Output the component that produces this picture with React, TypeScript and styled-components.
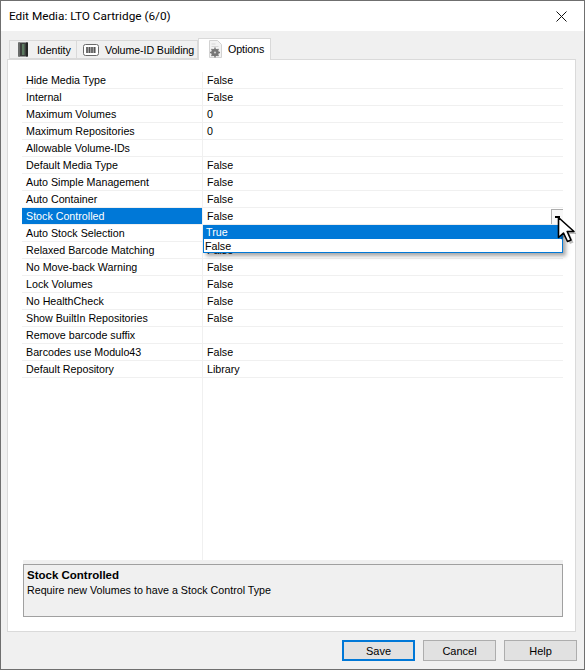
import React from 'react';
import styled, { createGlobalStyle } from 'styled-components';

const GlobalStyle = createGlobalStyle`
    html, body {
        margin: 0;
        padding: 0;
        background: #F0F0F0;
    }
`;

const Window = styled.div`
    position: relative;
    box-sizing: border-box;
    width: 585px;
    height: 670px;
    display: flex;
    flex-direction: column;
    background: #F0F0F0;
    border: 1px solid #6F6F6F;
    font-family: "Liberation Sans", Arial, sans-serif;
    font-size: 10.7px;
    color: #000;
    overflow: hidden;
`;

const TitleBar = styled.div`
    height: 30px;
    flex: none;
    display: flex;
    align-items: center;
    justify-content: space-between;
    padding-left: 8px;
    background: #FFF;
    font-family: Roboto, sans-serif;
    font-size: 11.8px;
`;

const CloseButton = styled.div`
    width: 46px;
    height: 30px;
    display: flex;
    align-items: center;
    justify-content: center;
`;

const TabStrip = styled.div`
    height: 28px;
    flex: none;
    display: flex;
    align-items: flex-end;
    padding-left: 8px;
`;

const Tab = styled.div<{ $width: number; $iconGap: number; $pad: number; $active?: boolean }>`
    box-sizing: border-box;
    position: relative;
    flex: none;
    display: flex;
    align-items: center;
    width: ${({ $width }) => $width}px;
    height: ${({ $active }) => ($active ? '22px' : '19px')};
    padding-left: ${({ $pad }) => $pad}px;
    padding-bottom: ${({ $active }) => ($active ? '2px' : '0')};
    gap: ${({ $iconGap }) => $iconGap}px;
    margin-bottom: ${({ $active }) => ($active ? '-1px' : '0')};
    background: ${({ $active }) => ($active ? '#FFF' : '#F0F0F0')};
    border: 1px solid #D9D9D9;
    border-left-width: ${({ $pad }) => ($pad === 6 ? '0' : '1px')};
    border-bottom-width: ${({ $active }) => ($active ? '0' : '1px')};
    z-index: ${({ $active }) => ($active ? 1 : 0)};
`;

const TabLabel = styled.span`
    white-space: nowrap;
    letter-spacing: -0.1px;
`;

const TabPanel = styled.div`
    box-sizing: border-box;
    flex: none;
    width: 569px;
    height: 573px;
    margin-left: 6px;
    display: flex;
    flex-direction: column;
    padding: 12px 12px 14px 14px;
    background: #FFF;
    border: 1px solid #DADADA;
`;

const PropertyGrid = styled.div`
    flex: 1;
    display: flex;
    flex-direction: column;
`;

const Row = styled.div`
    position: relative;
    height: 17px;
    flex: none;
    display: grid;
    grid-template-columns: 181px 1fr;
    box-sizing: border-box;
    border-bottom: 1px solid #F0F0F0;
`;

const NameCell = styled.div<{ $selected?: boolean }>`
    box-sizing: border-box;
    padding-left: 4px;
    line-height: 16px;
    white-space: nowrap;
    border-right: 1px solid #F0F0F0;
    background: ${({ $selected }) => ($selected ? '#0078D7' : '#FFF')};
    color: ${({ $selected }) => ($selected ? '#FFF' : '#000')};
`;

const ValueCell = styled.div`
    padding-left: 4px;
    line-height: 16px;
`;

const GridFiller = styled.div`
    flex: 1;
    width: 181px;
    box-sizing: border-box;
    border-right: 1px solid #F0F0F0;
`;

const DropButton = styled.div`
    position: absolute;
    right: 0;
    top: 1px;
    box-sizing: border-box;
    width: 12px;
    height: 15px;
    background: #F8F8F8;
    border: 1px solid #ADADAD;
    border-right: none;
    border-bottom: none;
    display: flex;
    justify-content: center;
    padding-top: 6px;
`;

const DropArrow = styled.div`
    width: 5px;
    height: 2px;
    background: #000;
`;

const DropList = styled.div`
    position: absolute;
    z-index: 2;
    left: 181px;
    right: 0;
    top: 17px;
    box-sizing: border-box;
    height: 28px;
    background: #FFF;
    border: 1px solid #0078D7;
    box-shadow: 3px 3px 4px rgba(0, 0, 0, 0.35);
`;

const DropItem = styled.div<{ $selected?: boolean }>`
    height: 13px;
    line-height: ${({ $selected }) => ($selected ? '13px' : '15px')};
    padding-left: ${({ $selected }) => ($selected ? '2px' : '1px')};
    background: ${({ $selected }) => ($selected ? '#0078D7' : '#FFF')};
    color: ${({ $selected }) => ($selected ? '#FFF' : '#000')};
`;

const Description = styled.div`
    flex: none;
    margin-left: 1px;
    padding-top: 4px;
    background: #F0F0F0;
`;

const DescriptionBox = styled.div`
    box-sizing: border-box;
    height: 53px;
    padding: 3px 3px;
    border: 1px solid #A0A0A0;
    line-height: 15px;
`;

const DescriptionTitle = styled.div`
    font-weight: bold;
    font-size: 11.5px;
`;

const ButtonRow = styled.div`
    flex: 1;
    display: flex;
    justify-content: flex-end;
    align-items: flex-start;
    gap: 8px;
    padding: 8px 7px 0 0;
`;

const Button = styled.div<{ $primary?: boolean }>`
    box-sizing: border-box;
    width: 73px;
    height: 21px;
    display: flex;
    align-items: center;
    justify-content: center;
    font-size: 11px;
    background: #E1E1E1;
    border: ${({ $primary }) => ($primary ? '2px solid #0078D7' : '1px solid #ADADAD')};
`;

const Pointer = styled.svg`
    position: absolute;
    z-index: 3;
    left: 555px;
    top: 214px;
`;

const IdentityIcon = () => (
    <svg width="12" height="15" viewBox="0 0 12 15">
        <rect x="1" y="0.5" width="10" height="14" rx="1" fill="#3D3F3E" />
        <rect x="1" y="0.5" width="2" height="14" fill="#6A6C6B" />
        <rect x="9" y="0.5" width="2" height="14" fill="#232524" />
        <rect x="5" y="2" width="2.500" height="11" fill="#5C7A60" />
    </svg>
);

const BarcodeIcon = () => (
    <svg width="16" height="12" viewBox="0 0 16 12">
        <rect x="0.5" y="0.5" width="15" height="11" rx="2" fill="#FFF" stroke="#6A6A6A" />
        <rect x="3" y="3" width="10" height="6" fill="#BDBDBD" />
        <path d="M4 3v6M6.500 3v6M9 3v6M11.500 3v6" stroke="#555" strokeWidth="1.500" />
    </svg>
);

const OptionsIcon = () => (
    <svg width="15" height="18" viewBox="0 0 15 18">
        <path d="M1.500 0.500h8l4 4v13h-12z" fill="#F2F2F2" stroke="#D2D2D2" />
        <path d="M3.500 4h4M3.500 6.500h7" stroke="#D6D6D6" />
        <circle cx="7" cy="12.500" r="3.800" fill="#777" />
        <circle cx="7" cy="12.500" r="1.100" fill="#CCC" />
        <path d="M7 7.500v2M7 15.500v2M2 12.500h2M10 12.500h2M3.500 9l1.500 1.500M10.500 9l-1.500 1.500M3.500 16l1.500-1.500M10.500 16l-1.500-1.500" stroke="#777" strokeWidth="1.400" />
    </svg>
);

const properties: [string, string][] = [
    ['Hide Media Type', 'False'],
    ['Internal', 'False'],
    ['Maximum Volumes', '0'],
    ['Maximum Repositories', '0'],
    ['Allowable Volume-IDs', ''],
    ['Default Media Type', 'False'],
    ['Auto Simple Management', 'False'],
    ['Auto Container', 'False'],
    ['Stock Controlled', 'False'],
    ['Auto Stock Selection', 'False'],
    ['Relaxed Barcode Matching', 'False'],
    ['No Move-back Warning', 'False'],
    ['Lock Volumes', 'False'],
    ['No HealthCheck', 'False'],
    ['Show BuiltIn Repositories', 'False'],
    ['Remove barcode suffix', ''],
    ['Barcodes use Modulo43', 'False'],
    ['Default Repository', 'Library'],
];

const App = (): JSX.Element => {
    return (
        <Window>
            <GlobalStyle />
            <TitleBar>
                Edit Media: LTO Cartridge (6/0)
                <CloseButton>
                    <svg width="11" height="11" viewBox="0 0 11 11">
                        <path d="M0.500 0.500l10 10M10.500 0.500l-10 10" stroke="#111" strokeWidth="1" />
                    </svg>
                </CloseButton>
            </TitleBar>
            <TabStrip>
                <Tab $width={68} $pad={7} $iconGap={8}><IdentityIcon /><TabLabel>Identity</TabLabel></Tab>
                <Tab $width={121} $pad={6} $iconGap={6}><BarcodeIcon /><TabLabel>Volume-ID Building</TabLabel></Tab>
                <Tab $width={73} $pad={9} $iconGap={5} $active><OptionsIcon /><TabLabel>Options</TabLabel></Tab>
            </TabStrip>
            <TabPanel>
                <PropertyGrid>
                    {properties.map(([name, value]) => {
                        const selected = name === 'Stock Controlled';
                        return (
                            <Row key={name}>
                                <NameCell $selected={selected}>{name}</NameCell>
                                <ValueCell>{value}</ValueCell>
                                {selected && (
                                    <>
                                        <DropButton><DropArrow /></DropButton>
                                        <DropList>
                                            <DropItem $selected>True</DropItem>
                                            <DropItem>False</DropItem>
                                        </DropList>
                                    </>
                                )}
                            </Row>
                        );
                    })}
                    <GridFiller />
                </PropertyGrid>
                <Description>
                    <DescriptionBox>
                        <DescriptionTitle>Stock Controlled</DescriptionTitle>
                        Require new Volumes to have a Stock Control Type
                    </DescriptionBox>
                </Description>
            </TabPanel>
            <ButtonRow>
                <Button $primary>Save</Button>
                <Button>Cancel</Button>
                <Button>Help</Button>
            </ButtonRow>
            <Pointer width="20" height="30" viewBox="0 0 20 30">
                <path d="M3.500 3.500v20l5-4.500 4 8.500 3.500-1.500-3.800-8.500h6.800z" fill="#000" opacity="0.25" transform="translate(1.500 1.500)" />
                <path d="M2.500 2.500v20l5-4.500 4 8.500 3.500-1.500-3.800-8.500h6.800z" fill="#FFF" stroke="#000" strokeWidth="1.600" strokeLinejoin="round" />
            </Pointer>
        </Window>
    );
};

export default App;
